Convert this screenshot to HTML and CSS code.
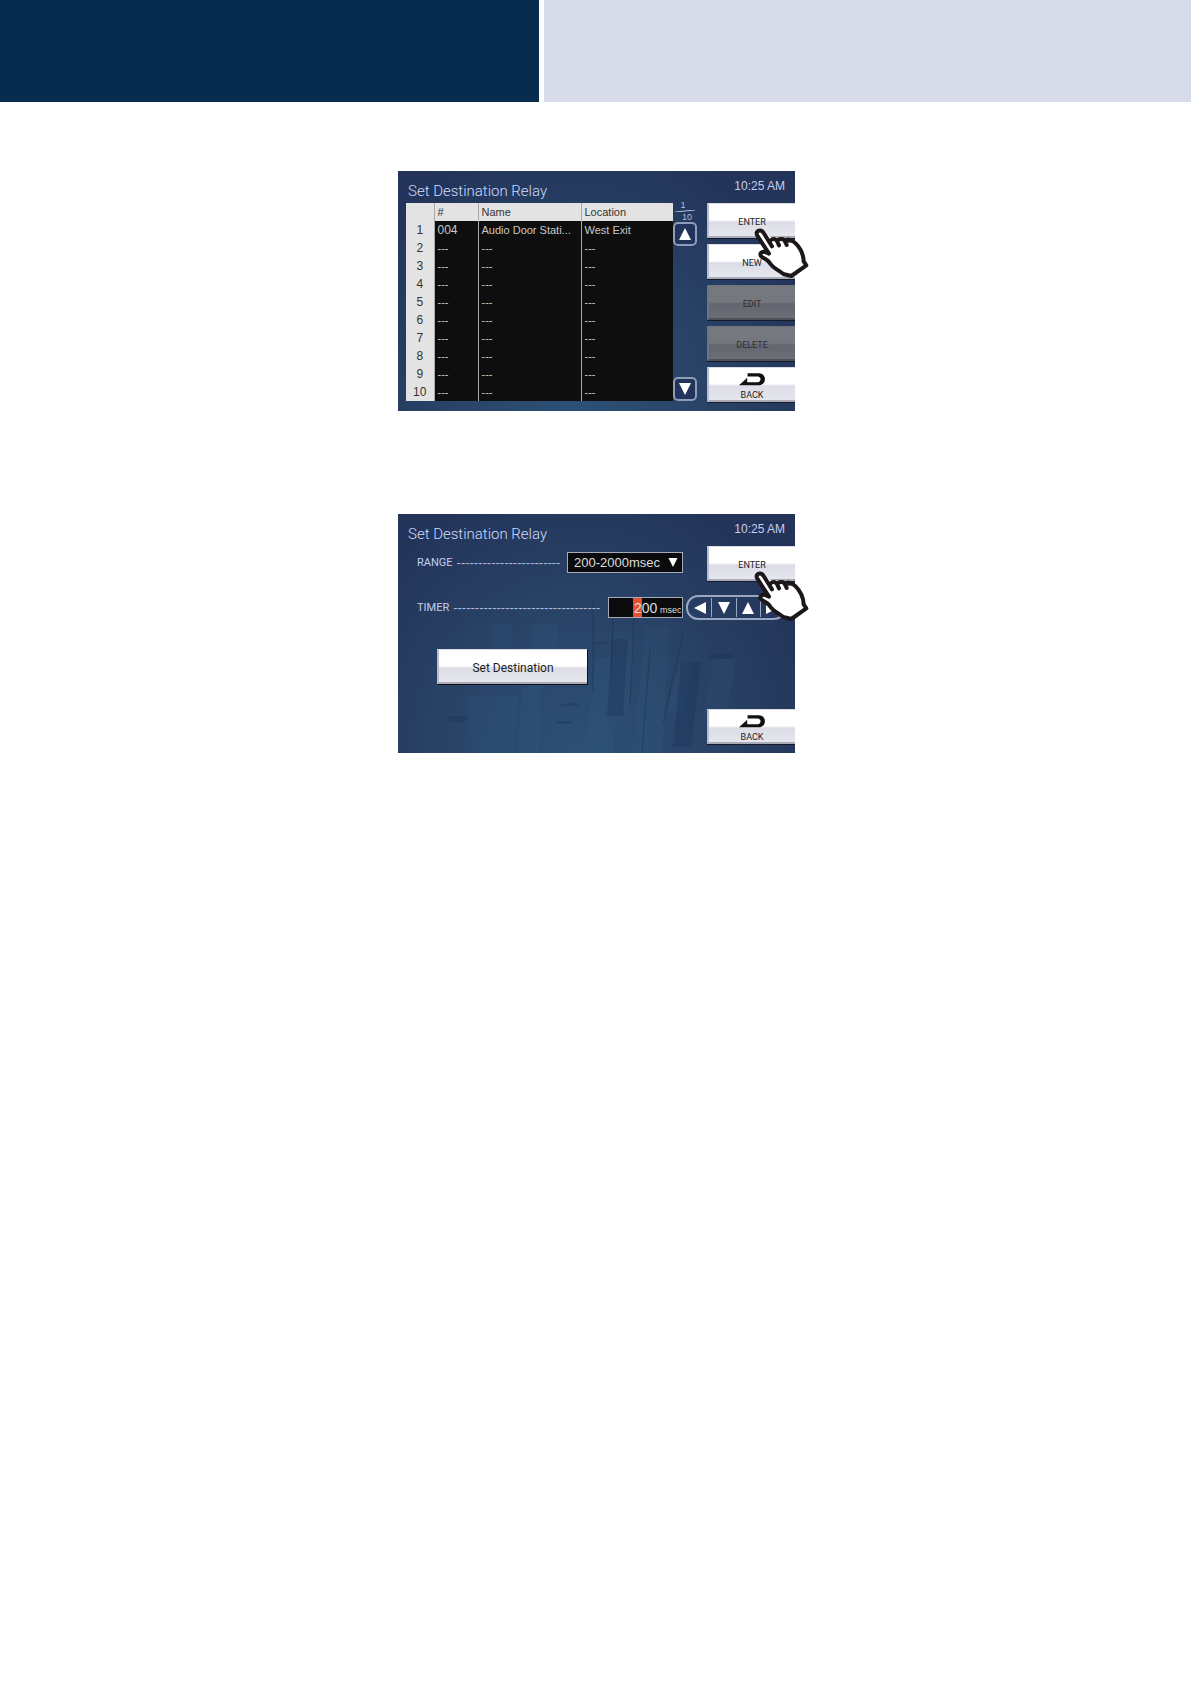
FILE: index.html
```html
<!DOCTYPE html>
<html lang="en">
<head>
    <meta charset="UTF-8">
    <title>Set Destination Relay</title>
    <link rel="stylesheet" href="styles.css">
</head>
<body>
    <!-- Shared shapes -->
    <svg class="shapes" aria-hidden="true">
        <symbol id="hand" viewBox="0 0 165 153">
            <path d="M18 12 C10 12 7 20 12 27 L46 78 L31 73 C22 72 18 81 25 87 L47 101 C58 117 72 126 84 137 L92 142 L112 148 L157 115 L149 103 C148 76 140 64 126 49 C120 39 108 33 101 39 C96 32 84 29 77 36 C71 30 60 26 53 32 L30 16 C26 12 22 11 18 12 Z" fill="#fff" stroke="none"/>
            <path d="M54 58 L29 18 C24 9 14 8 9 15 C7 19 8 23 10 26 L45 80 C38 76 32 73 26 75 C17 78 17 86 25 91 C35 96 43 100 48 109 C58 123 74 130 88 141 L112 147 L157 115 L149 103 C148 78 139 63 125 49 C119 43 112 38 103 41 M48 42 C56 33 66 35 70 44 L75 55 M69 41 C77 34 89 34 93 43 L98 54 M92 42 C98 37 106 36 113 41" fill="none" stroke="#1c1718" stroke-width="12" stroke-linecap="round" stroke-linejoin="round"/>
        </symbol>
        <symbol id="up" viewBox="0 0 12 12"><path d="M6 0 L12 12 H0 Z"/></symbol>
        <symbol id="down" viewBox="0 0 12 12"><path d="M0 0 H12 L6 12 Z"/></symbol>
        <symbol id="left" viewBox="0 0 12 12"><path d="M12 0 V12 L0 6 Z"/></symbol>
        <symbol id="right" viewBox="0 0 12 12"><path d="M0 0 V12 L12 6 Z"/></symbol>
        <symbol id="back" viewBox="0 0 76 38">
            <path d="M0 36 L24 14 V27 H54 C66 27 66 10 54 10 H25 V1 H58 C82 1 82 36 56 36 Z" fill="#111"/>
        </symbol>
    </svg>

    <header class="banner">
        <div class="banner-dark"></div>
        <div class="banner-light"></div>
    </header>

    <main>
        <!-- Relay list -->
        <section class="screen">
            <div class="top-bar">
                <h1>Set Destination Relay</h1>
                <span class="clock">10:25 AM</span>
            </div>
            <div class="list">
                <table>
                    <thead>
                        <tr><th class="col-row"></th><th class="col-id">#</th><th class="col-name">Name</th><th>Location</th></tr>
                    </thead>
                    <tbody>
                        <tr><th>1</th><td class="id">004</td><td>Audio Door Stati...</td><td>West Exit</td></tr>
                        <tr><th>2</th><td>---</td><td>---</td><td>---</td></tr>
                        <tr><th>3</th><td>---</td><td>---</td><td>---</td></tr>
                        <tr><th>4</th><td>---</td><td>---</td><td>---</td></tr>
                        <tr><th>5</th><td>---</td><td>---</td><td>---</td></tr>
                        <tr><th>6</th><td>---</td><td>---</td><td>---</td></tr>
                        <tr><th>7</th><td>---</td><td>---</td><td>---</td></tr>
                        <tr><th>8</th><td>---</td><td>---</td><td>---</td></tr>
                        <tr><th>9</th><td>---</td><td>---</td><td>---</td></tr>
                        <tr><th>10</th><td>---</td><td>---</td><td>---</td></tr>
                    </tbody>
                </table>
                <div class="pager">
                    <div class="pages">
                        <span>1</span>
                        <svg viewBox="0 0 20 2"><path d="M0 2 L20 0" stroke="#b4bfdc"/></svg>
                        <span class="total">10</span>
                    </div>
                    <button class="page-button" aria-label="Page up"><svg><use href="#up"/></svg></button>
                    <button class="page-button last" aria-label="Page down"><svg><use href="#down"/></svg></button>
                </div>
            </div>
            <div class="side">
                <button class="key">ENTER</button>
                <button class="key">NEW</button>
                <button class="key" disabled>EDIT</button>
                <button class="key" disabled>DELETE</button>
                <button class="key back"><svg><use href="#back"/></svg>BACK</button>
            </div>
            <svg class="hand"><use href="#hand"/></svg>
        </section>

        <!-- Relay timer -->
        <section class="screen">
            <svg class="facets" viewBox="0 0 397 239" preserveAspectRatio="none" aria-hidden="true">
                <g fill="#3a6f92" opacity="0.1">
                    <path d="M95 110 h18 v24 h-18z M134 110 h26 l-2 30 h-24z M70 182 h50 l-4 57 h-42z M126 165 h18 l-4 74 h-22z M198 144 h22 l-4 95 h-30z"/>
                    <path d="M216 118 h20 l-5 82 h-22z M248 112 h24 l-8 127 h-30z M282 148 h12 l-8 50 h-18z M316 145 h22 l-10 60 h-24z"/>
                </g>
                <g fill="#1a2b52" opacity="0.3">
                    <path d="M283 148 h20 l-10 85 h-18z M214 125 h16 l-5 76 h-16z M158 192 l16 -4 10 4z M158 207 h18 l-4 3 h-14z M50 202 h20 l-4 6 h-14z M312 140 h22 v5 h-24z"/>
                </g>
                <path d="M195 85 V180 M215 105 L213 160 M236 105 L232 190 M252 135 L244 239 M285 118 L265 210 M195 129 H213 M209 201 H226" fill="none" stroke="#172847" opacity="0.4"/>
            </svg>
            <div class="top-bar">
                <h1>Set Destination Relay</h1>
                <span class="clock">10:25 AM</span>
            </div>
            <div class="side">
                <button class="key">ENTER</button>
                <button class="key back"><svg><use href="#back"/></svg>BACK</button>
            </div>
            <form class="settings">
                <div class="row range-row">
                    <label for="range">RANGE</label>
                    <span class="leader" aria-hidden="true">------------------------</span>
                    <div class="range">
                        <select id="range"><option>200-2000msec</option></select>
                        <svg><use href="#down"/></svg>
                    </div>
                </div>
                <div class="row">
                    <label for="timer">TIMER</label>
                    <span class="leader" aria-hidden="true">----------------------------------</span>
                    <div class="timer">
                        <input id="timer" type="text" value="200">
                        <span>msec</span>
                    </div>
                    <div class="arrows">
                        <button type="button" aria-label="Left"><svg><use href="#left"/></svg></button>
                        <button type="button" aria-label="Down"><svg><use href="#down"/></svg></button>
                        <button type="button" aria-label="Up"><svg><use href="#up"/></svg></button>
                        <button type="button" aria-label="Right"><svg><use href="#right"/></svg></button>
                    </div>
                </div>
                <button type="button" class="key destination">Set Destination</button>
            </form>
            <svg class="hand"><use href="#hand"/></svg>
        </section>
    </main>
</body>
</html>
```
FILE: styles.css
```css
/* General */
* {
    box-sizing: border-box;
}

body {
    margin: 0;
    background-color: #fff;
    font-family: "Liberation Sans", Arial, sans-serif;
}

button, input, select {
    margin: 0;
    padding: 0;
    border: none;
    font-family: inherit;
}

.shapes {
    display: none;
}

/* Banner */
.banner {
    display: flex;
    gap: 5px;
    height: 102px;
}

.banner-dark {
    flex: 539;
    background-color: #062d4d;
}

.banner-light {
    flex: 647;
    background-color: #d7dbea;
}

/* Screens */
main {
    display: flex;
    flex-direction: column;
    align-items: center;
    gap: 103px;
    padding: 69px 0 69px 2px;
}

.screen {
    position: relative;
    display: grid;
    grid-template-columns: 1fr 88px;
    grid-template-rows: 32px auto;
    column-gap: 10px;
    width: 100%;
    max-width: 397px;
    padding: 0 0 9px 8px;
    background: radial-gradient(ellipse at 45% 100%, #2c5074 0%, #294468 40%, #233359 85%);
}

.facets {
    position: absolute;
    width: 100%;
    height: 100%;
}

.top-bar {
    position: relative;
    grid-column: 1 / -1;
    display: flex;
    justify-content: space-between;
    padding: 0 10px 0 2px;
}

h1 {
    margin: 0;
    padding-top: 9px;
    font: 300 15px/22px Roboto, sans-serif;
    color: #cfdcff;
}

.clock {
    font-size: 12px;
    line-height: 31px;
    color: #c3cfee;
}

/* List */
.list {
    display: flex;
    height: 198px;
}

table {
    flex: 1;
    table-layout: fixed;
    border-collapse: collapse;
    background-color: #0e0e0e;
    color: #c8c8c8;
    font-size: 11px;
    line-height: 18px;
}

th, td {
    height: 18px;
    padding: 0 0 0 3px;
    border-left: 1px solid #a9a9a9;
    text-align: left;
    font-weight: normal;
    white-space: nowrap;
}

th {
    background-color: #e4e3e3;
    color: #333;
}

tbody th {
    padding: 0;
    text-align: center;
    font-size: 12px;
}

th:first-child {
    border-left: none;
}

.id {
    font-size: 12px;
}

.col-row {
    width: 28px;
}

.col-id {
    width: 44px;
}

.col-name {
    width: 103px;
}

/* Pager */
.pager {
    display: flex;
    flex-direction: column;
    width: 24px;
}

.pages {
    display: flex;
    flex-direction: column;
    align-items: center;
    height: 19px;
    margin-top: -3px;
    margin-bottom: 3px;
    font-size: 9px;
    line-height: 10px;
    color: #b4bfdc;
}

.pages span {
    padding-right: 4px;
}

.pages svg {
    flex: none;
    width: 20px;
    height: 2px;
}

.pages .total {
    padding: 0 0 0 4px;
}

.page-button {
    width: 24px;
    height: 24px;
    border: 2px solid #8f9cb8;
    border-radius: 5px;
    background-color: #22345b;
}

.last {
    margin-top: auto;
}

.page-button svg, .arrows svg {
    display: block;
    width: 12px;
    height: 12px;
    margin: auto;
    fill: #fff;
}

/* Keys */
.side {
    grid-column: 2;
    grid-row: 2;
    position: relative;
    display: flex;
    flex-direction: column;
    gap: 6px;
}

.key {
    height: 35px;
    padding-top: 4px;
    border-left: 2px solid #b9bccb;
    border-top: 1px solid #dcdde4;
    border-bottom: 2px solid #a9abb6;
    background: linear-gradient(#fff 50%, #dcdce6 56%, #e6e6ee 100%);
    box-shadow: 0 1px 0 #141a2c;
    color: #222;
    font: 9px/10px Roboto, sans-serif;
}

.key:disabled {
    border-color: #70747c #70747c #4f5159 #70747c;
    background: linear-gradient(#75797f 50%, #63666e 56%, #6b6e76 100%);
    color: #2b2d31;
}

.back {
    display: flex;
    flex-direction: column;
    align-items: center;
    justify-content: flex-end;
    gap: 4px;
    margin-top: auto;
}

.back svg {
    width: 26px;
    height: 13px;
}

/* Settings */
.settings {
    grid-column: 1 / -1;
    grid-row: 2;
    position: relative;
    padding: 6px 9px 60px 11px;
    pointer-events: none;
}

.settings button, .settings input, .settings select {
    pointer-events: auto;
}

.row {
    display: flex;
    align-items: center;
    height: 21px;
    margin-bottom: 24px;
}

.range-row {
    padding-right: 103px;
}

.row label {
    font: 11px/20px Roboto, sans-serif;
    color: #c3cfee;
}

.leader {
    flex: 1;
    margin: 0 4px;
    font-size: 13px;
    line-height: 20px;
    color: #aebbdc;
    white-space: nowrap;
}

.range {
    position: relative;
    width: 116px;
}

.range select {
    appearance: none;
    display: block;
    width: 100%;
    height: 21px;
    padding-left: 6px;
    border: 1px solid #a5abb8;
    border-radius: 0;
    background-color: #0b0b0d;
    color: #dedede;
    font-size: 13px;
}

.range svg {
    position: absolute;
    right: 5px;
    top: 6px;
    width: 10px;
    height: 9px;
    fill: #fff;
    pointer-events: none;
}

.timer {
    display: flex;
    align-items: center;
    width: 75px;
    height: 21px;
    border: 1px solid #a5abb8;
    background-color: #0b0b0d;
    color: #dedede;
    font-size: 9px;
}

/* The digit being edited is marked red */
.timer input {
    width: 51px;
    height: 19px;
    padding-left: 25px;
    background: linear-gradient(#e94f2e, #e94f2e) 24px 0 / 9px 100% no-repeat;
    color: #dedede;
    font-size: 14px;
}

.timer span {
    padding-top: 4px;
}

.arrows {
    display: flex;
    width: 100px;
    height: 25px;
    margin-left: 3px;
    padding: 1px 0;
    border: 2px solid #9aa6c3;
    border-radius: 12px;
}

.arrows button {
    flex: 1;
    background: none;
}

.arrows button + button {
    border-left: 1px solid #9aa6c3;
}

.destination {
    width: 150px;
    margin: 7px 0 0 20px;
    box-shadow: 1px 1px 0 #111;
    font-size: 12px;
}

/* Pointing hand over the ENTER key */
.hand {
    position: absolute;
    right: -14px;
    top: 56px;
    width: 55px;
    height: 51px;
    pointer-events: none;
}
```
